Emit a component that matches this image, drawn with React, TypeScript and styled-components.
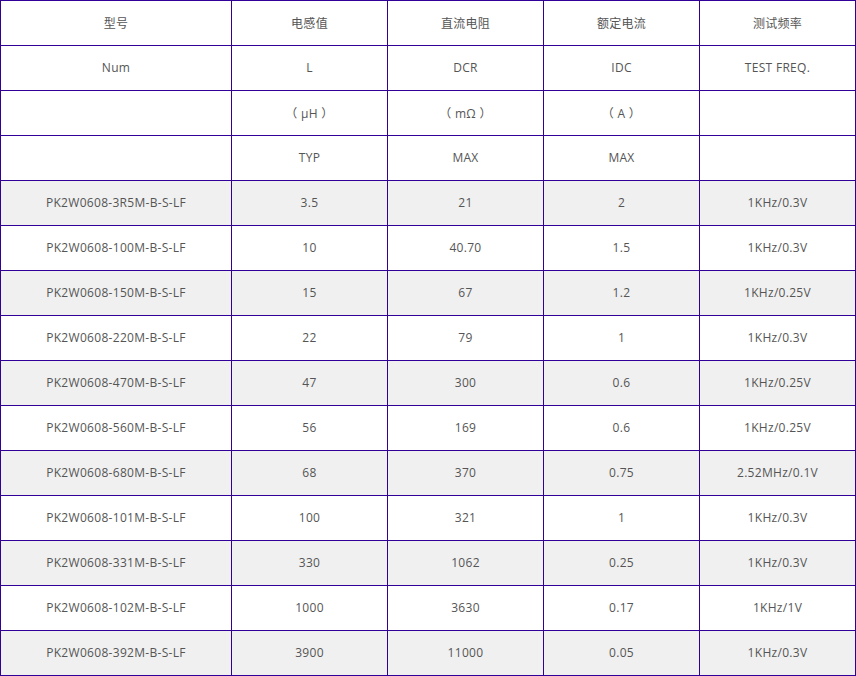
import React, { FC } from "react";
import styled, { createGlobalStyle } from "styled-components";

const GlobalStyle = createGlobalStyle`
  body {
    margin: 0;
    background: #ffffff;
    font-family: "Open Sans", "Noto Sans CJK SC", sans-serif;
  }
`;

const SpecTable = styled.table`
  width: 856px;
  table-layout: fixed;
  border-collapse: collapse;
  color: #555555;
  font-size: 12px;
  letter-spacing: 0.3px;
`;

const Col = styled.col<{ $wide?: boolean }>`
  width: ${(p) => (p.$wide ? "231px" : "156px")};
`;

const Row = styled.tr<{ $shaded?: boolean }>`
  height: 45px;
  background: ${(p) => (p.$shaded ? "#f0f0f0" : "#ffffff")};
`;

const Cell = styled.td`
  border: 1px solid #300099;
  padding: 0 0 1px;
  text-align: center;
  vertical-align: middle;
  white-space: nowrap;
`;

const headRows: string[][] = [
  ["型号", "电感值", "直流电阻", "额定电流", "测试频率"],
  ["Num", "L", "DCR", "IDC", "TEST FREQ."],
  ["", "（ μH ）", "（ mΩ ）", "（ A ）", ""],
  ["", "TYP", "MAX", "MAX", ""],
];

const parts: string[][] = [
  ["PK2W0608-3R5M-B-S-LF", "3.5", "21", "2", "1KHz/0.3V"],
  ["PK2W0608-100M-B-S-LF", "10", "40.70", "1.5", "1KHz/0.3V"],
  ["PK2W0608-150M-B-S-LF", "15", "67", "1.2", "1KHz/0.25V"],
  ["PK2W0608-220M-B-S-LF", "22", "79", "1", "1KHz/0.3V"],
  ["PK2W0608-470M-B-S-LF", "47", "300", "0.6", "1KHz/0.25V"],
  ["PK2W0608-560M-B-S-LF", "56", "169", "0.6", "1KHz/0.25V"],
  ["PK2W0608-680M-B-S-LF", "68", "370", "0.75", "2.52MHz/0.1V"],
  ["PK2W0608-101M-B-S-LF", "100", "321", "1", "1KHz/0.3V"],
  ["PK2W0608-331M-B-S-LF", "330", "1062", "0.25", "1KHz/0.3V"],
  ["PK2W0608-102M-B-S-LF", "1000", "3630", "0.17", "1KHz/1V"],
  ["PK2W0608-392M-B-S-LF", "3900", "11000", "0.05", "1KHz/0.3V"],
];

const App: FC = () => {
  return (
    <>
      <GlobalStyle />
      <SpecTable>
        <colgroup>
          <Col $wide />
          <Col />
          <Col />
          <Col />
          <Col />
        </colgroup>
        <tbody>
          {headRows.map((r, i) => (
            <Row key={"h" + i}>
              {r.map((c, j) => (
                <Cell key={j}>{c}</Cell>
              ))}
            </Row>
          ))}
          {parts.map((r, i) => (
            <Row key={r[0]} $shaded={i % 2 === 0}>
              {r.map((c, j) => (
                <Cell key={j}>{c}</Cell>
              ))}
            </Row>
          ))}
        </tbody>
      </SpecTable>
    </>
  );
};

export default App;
